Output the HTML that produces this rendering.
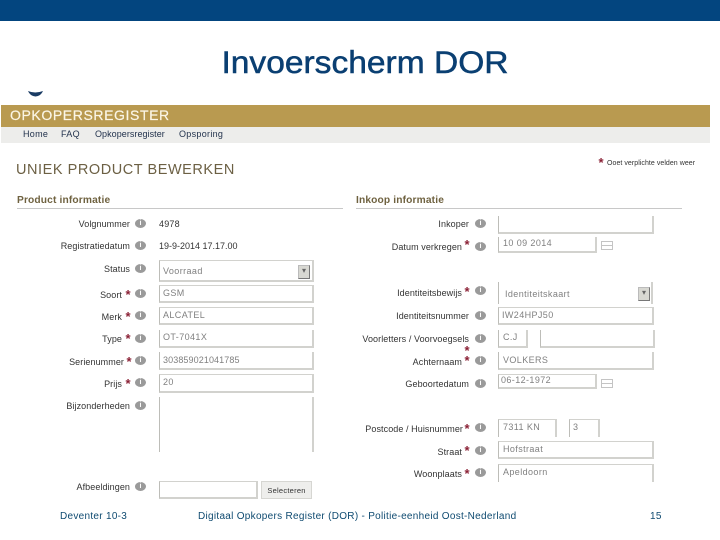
<!DOCTYPE html>
<html><head><meta charset="utf-8">
<style>
html,body{margin:0;padding:0;background:#fff}
#p{position:relative;width:720px;height:540px;overflow:hidden;background:#fff;font-family:"Liberation Sans",sans-serif}
#p div{position:absolute;box-sizing:border-box;white-space:nowrap}
.l{font-size:9px;line-height:12px;color:#333;text-align:right;width:130px;letter-spacing:.08px}
.a{left:0;width:130px}
.b{left:339px;width:130px}
.s{color:#8a2035;font-size:13px;font-weight:bold;line-height:13px;width:8px;text-align:center}
.i{width:11px;height:9px;border-radius:50%;background:#9a9a9a;color:#fff;font-size:7px;line-height:9px;text-align:center;font-weight:bold}
.f{border:1px solid #d2d2ce;border-width:1px 2px 2px 1px;border-left-color:#bdbdb8;font-size:9px;line-height:15px;color:#808080;padding-left:3px;letter-spacing:.4px}
.nt{border-top:0}
.v{font-size:9px;line-height:12px;color:#333;letter-spacing:.1px}
.h{font-size:10.2px;font-weight:bold;color:#6f6240;line-height:12px;letter-spacing:.15px}
.ft{font-size:10px;line-height:12px;color:#0e4a70;letter-spacing:.29px}
.dd{width:12px;height:14px;background:#d8d8d2;border:1px solid #bbb;border-bottom-color:#777;border-right-color:#777;font-size:8px;line-height:10px;text-align:center;color:#666}
.c{width:12px;height:9px;border:1px solid #c4c4c4;background:linear-gradient(#c4c4c4,#c4c4c4) 0 3px/100% 1px no-repeat}
</style></head><body><div id="p">
<div style="left:0;top:0;width:720px;height:21px;background:#03457f"></div>
<div style="left:0;top:43px;width:730px;text-align:center;font-size:31.5px;line-height:38px;color:#0a3f72;transform:scaleX(1.065);-webkit-text-stroke:.5px #0a3f72">Invoerscherm DOR</div>
<svg style="position:absolute;left:27px;top:90px" width="17" height="8"><path d="M1 1 Q8 4 16 1 Q14 6 8.500 6.500 Q3 6 1 1Z" fill="#1a3c64"/></svg>

<div style="left:1px;top:105px;width:709px;height:22px;background:#b99a50"></div>
<div style="left:1px;top:127px;width:709px;height:16px;background:#ededeb"></div>
<div style="left:10px;top:108px;font-size:14px;line-height:15px;color:#fbf6e6;letter-spacing:.6px;-webkit-text-stroke:.2px #fbf6e6">OPKOPERSREGISTER</div>
<div class="v" style="left:23px;top:128px;color:#1f2f4a;letter-spacing:.3px">Home</div>
<div class="v" style="left:61px;top:128px;color:#1f2f4a;letter-spacing:.3px">FAQ</div>
<div class="v" style="left:95px;top:128px;color:#1f2f4a;letter-spacing:.05px">Opkopersregister</div>
<div class="v" style="left:179px;top:128px;color:#1f2f4a;letter-spacing:.3px">Opsporing</div>

<div style="left:16px;top:162px;font-size:14.5px;line-height:16px;color:#6c6044;letter-spacing:.55px">UNIEK PRODUCT BEWERKEN</div>
<div class="s" style="left:597px;top:156px">*</div>
<div style="left:607px;top:159px;font-size:7px;line-height:9px;color:#333;letter-spacing:.05px">Ooet verplichte velden weer</div>

<div class="h" style="left:17px;top:195px">Product informatie</div>
<div class="h" style="left:356px;top:195px">Inkoop informatie</div>
<div style="left:17px;top:208px;width:326px;height:1px;background:#c8c8c8"></div>
<div style="left:356px;top:208px;width:326px;height:1px;background:#c8c8c8"></div>

<div class="l a" style="top:218px">Volgnummer</div><div class="i" style="left:135px;top:219px">i</div>
<div class="v" style="left:159px;top:218px;letter-spacing:.2px">4978</div>
<div class="l a" style="top:240px">Registratiedatum</div><div class="i" style="left:135px;top:241px">i</div>
<div class="v" style="left:159px;top:240px;letter-spacing:0">19-9-2014 17.17.00</div>
<div class="l a" style="top:263px">Status</div><div class="i" style="left:135px;top:264px">i</div>
<div class="f" style="left:159px;top:260px;width:155px;height:22px;padding-top:3px">Voorraad</div><div class="dd" style="left:298px;top:265px">▾</div>

<div class="l a" style="top:289px;width:122px">Soort</div><div class="s" style="left:124px;top:288px">*</div><div class="i" style="left:135px;top:289px">i</div>
<div class="f" style="left:159px;top:285px;width:155px;height:18px">GSM</div>
<div class="l a" style="top:311px;width:122px">Merk</div><div class="s" style="left:124px;top:310px">*</div><div class="i" style="left:135px;top:311px">i</div>
<div class="f" style="left:159px;top:307px;width:155px;height:18px">ALCATEL</div>
<div class="l a" style="top:333px;width:122px">Type</div><div class="s" style="left:124px;top:332px">*</div><div class="i" style="left:135px;top:334px">i</div>
<div class="f nt" style="left:159px;top:330px;width:155px;height:18px">OT-7041X</div>
<div class="l a" style="top:356px;width:124px">Serienummer</div><div class="s" style="left:125px;top:355px">*</div><div class="i" style="left:135px;top:356px">i</div>
<div class="f nt" style="left:159px;top:352px;width:155px;height:18px;padding-top:1px;letter-spacing:.1px">303859021041785</div>
<div class="l a" style="top:378px;width:122px">Prijs</div><div class="s" style="left:124px;top:377px">*</div><div class="i" style="left:135px;top:378px">i</div>
<div class="f" style="left:159px;top:374px;width:155px;height:19px">20</div>
<div class="l a" style="top:400px">Bijzonderheden</div><div class="i" style="left:135px;top:401px">i</div>
<div class="f" style="left:159px;top:397px;width:155px;height:55px;border-top:0;border-bottom:0"></div>
<div class="l a" style="top:481px">Afbeeldingen</div><div class="i" style="left:135px;top:482px">i</div>
<div class="f" style="left:159px;top:481px;width:99px;height:18px"></div>
<div style="left:261px;top:481px;width:51px;height:18px;background:#eeeeec;border:1px solid #d6d6d2;font-size:7.5px;line-height:17px;color:#333;text-align:center;letter-spacing:.25px">Selecteren</div>

<div class="l b" style="top:218px">Inkoper</div><div class="i" style="left:475px;top:219px">i</div>
<div class="f nt" style="left:498px;top:216px;width:156px;height:18px"></div>
<div class="l b" style="top:241px;width:123px">Datum verkregen</div><div class="s" style="left:463px;top:238px">*</div><div class="i" style="left:475px;top:242px">i</div>
<div class="f" style="left:498px;top:237px;width:99px;height:16px;border-top:0;line-height:12px;padding-left:4px">10 09 2014</div><div class="c" style="left:601px;top:241px"></div>

<div class="l b" style="top:287px;width:123px">Identiteitsbewijs</div><div class="s" style="left:463px;top:285px">*</div><div class="i" style="left:475px;top:286px">i</div>
<div class="f nt" style="left:498px;top:282px;width:155px;height:22px;border-bottom:0;padding:5px 0 0 6px">Identiteitskaart</div><div class="dd" style="left:638px;top:287px">▾</div>
<div class="l b" style="top:310px">Identiteitsnummer</div><div class="i" style="left:475px;top:311px">i</div>
<div class="f" style="left:498px;top:307px;width:156px;height:18px">IW24HPJ50</div>
<div class="l b" style="top:333px">Voorletters / Voorvoegsels</div><div class="i" style="left:475px;top:334px">i</div>
<div class="s" style="left:463px;top:344px">*</div>
<div class="f nt" style="left:498px;top:330px;width:30px;height:18px;padding-left:4px">C.J</div>
<div class="f nt" style="left:540px;top:330px;width:115px;height:18px"></div>
<div class="l b" style="top:356px;width:123px">Achternaam</div><div class="s" style="left:463px;top:354px">*</div><div class="i" style="left:475px;top:356px">i</div>
<div class="f nt" style="left:498px;top:352px;width:156px;height:18px;padding-left:4px;padding-top:1px">VOLKERS</div>
<div class="l b" style="top:378px">Geboortedatum</div><div class="i" style="left:475px;top:379px">i</div>
<div class="f" style="left:498px;top:374px;width:99px;height:15px;line-height:11px;padding-left:2px">06-12-1972</div><div class="c" style="left:601px;top:379px"></div>
<div class="l b" style="top:423px;width:124px">Postcode / Huisnummer</div><div class="s" style="left:463px;top:422px">*</div><div class="i" style="left:475px;top:423px">i</div>
<div class="f" style="left:498px;top:419px;width:59px;height:18px;border-bottom:0;padding-left:4px;line-height:14px">7311 KN</div>
<div class="f" style="left:569px;top:419px;width:31px;height:18px;border-bottom:0;padding-left:3px;line-height:14px">3</div>
<div class="l b" style="top:446px;width:123px">Straat</div><div class="s" style="left:463px;top:444px">*</div><div class="i" style="left:475px;top:446px">i</div>
<div class="f" style="left:498px;top:441px;width:156px;height:18px;padding-left:4px;line-height:14px">Hofstraat</div>
<div class="l b" style="top:468px;width:123px">Woonplaats</div><div class="s" style="left:463px;top:467px">*</div><div class="i" style="left:475px;top:468px">i</div>
<div class="f" style="left:498px;top:464px;width:156px;height:18px;border-bottom:0;padding-left:4px;line-height:14px">Apeldoorn</div>

<div class="ft" style="left:60px;top:511px">Deventer 10-3</div>
<div class="ft" style="left:198px;top:511px">Digitaal Opkopers Register (DOR) - Politie-eenheid Oost-Nederland</div>
<div class="ft" style="left:650px;top:511px">15</div>
</div></body></html>
